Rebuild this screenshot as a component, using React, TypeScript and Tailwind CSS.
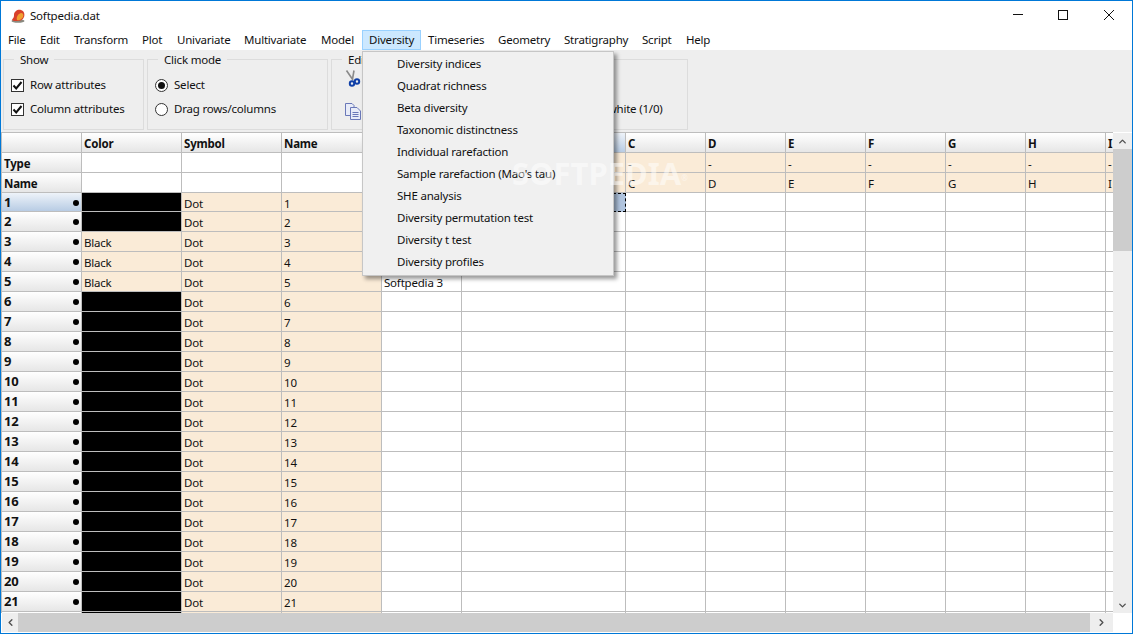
import { ChevronDown, ChevronLeft, ChevronRight, ChevronUp } from "lucide-react"

const menus = [
    { label: "File", w: "w-[32px]" },
    { label: "Edit", w: "w-[34px]" },
    { label: "Transform", w: "w-[68px]" },
    { label: "Plot", w: "w-[35px]" },
    { label: "Univariate", w: "w-[67px]" },
    { label: "Multivariate", w: "w-[77px]" },
    { label: "Model", w: "w-[48px]" },
    { label: "Diversity", w: "w-[59px]" },
    { label: "Timeseries", w: "w-[70px]" },
    { label: "Geometry", w: "w-[66px]" },
    { label: "Stratigraphy", w: "w-[78px]" },
    { label: "Script", w: "w-[44px]" },
    { label: "Help", w: "w-[39px]" },
]

const diversityItems = [
    "Diversity indices",
    "Quadrat richness",
    "Beta diversity",
    "Taxonomic distinctness",
    "Individual rarefaction",
    "Sample rarefaction (Mao's tau)",
    "SHE analysis",
    "Diversity permutation test",
    "Diversity t test",
    "Diversity profiles",
]

const letters = ["A", "B", "C", "D", "E", "F", "G", "H", "I"]
const colorNames = [3, 4, 5]
const rowCols = "grid grid-cols-[80px_100px_100px_100px_80px_164px_80px_80px_80px_80px_80px_80px_80px]"
const line = "border-r border-b border-[#bdbdbd] overflow-hidden whitespace-nowrap"

const AppIcon = () => (
    <svg width="16" height="16" viewBox="0 0 16 16">
        <ellipse cx="8" cy="13" rx="6.5" ry="1.8" fill="#8a8a80" />
        <path d="M2 12 C3 10 4 10 4 7 C4 3 8 1 11 2 C14 3 15 6 14 9 C13 12 10 13 7 13 C5 13 3 13 2 12 Z" fill="#d8402a" />
        <path d="M7 12 C6 9 8 6 11 5 C13 5 14 7 13 9 C12 11 9 13 7 12 Z" fill="#f0a030" />
    </svg>
)

const Check = () => (
    <span className="w-[13px] h-[13px] bg-white border border-[#333333] flex items-center justify-center">
        <svg width="11" height="11" viewBox="0 0 11 11">
            <path d="M1.5 5.5 L4.2 8.5 L9.5 2" fill="none" stroke="#111111" strokeWidth="2" />
        </svg>
    </span>
)

const Radio = ({ on }: { on?: boolean }) => (
    <span className="w-[13px] h-[13px] bg-white border border-[#333333] rounded-full flex items-center justify-center">
        {on && <span className="w-[7px] h-[7px] rounded-full bg-[#111111]" />}
    </span>
)

const Option = ({ control, label }: { control: React.ReactNode; label: string }) => (
    <div className="flex items-center h-[24px] gap-[6px]">
        {control}
        <span>{label}</span>
    </div>
)

const Group = ({ title, w, children }: { title: string; w: string; children?: React.ReactNode }) => (
    <fieldset className={`${w} h-[79px] border border-[#dcdcdc] pl-[7px] pt-[6px]`}>
        <legend className="ml-[3px] px-[6px] h-[16px] leading-[18px]">{title}</legend>
        {children}
    </fieldset>
)

const HeaderCell = ({ children, blue }: { children?: React.ReactNode; blue?: boolean }) => (
    <div className={`${line} pl-[2px] pt-[1px] font-bold leading-[19px] bg-gradient-to-b ${blue ? "from-[#eef3f9] to-[#b8cce4]" : "from-[#ffffff] to-[#e6e6e6]"}`}>
        {children}
    </div>
)

const Cell = ({ children, peach }: { children?: React.ReactNode; peach?: boolean }) => (
    <div className={`${line} pl-[2px] pt-[1px] leading-[19px] ${peach ? "bg-[#faebd7]" : "bg-white"}`}>{children}</div>
)

const DataRow = ({ n }: { n: number }) => {
    // row 22 only shows as a sliver above the scrollbar
    const sliver = n === 22
    const hasName = colorNames.includes(n)
    return (
        <div className={`${rowCols} ${n === 1 ? "h-[19px]" : "h-[20px]"}`}>
            <HeaderCell blue={n === 1}>
                {!sliver && (
                    <div className="flex items-center justify-between h-[17px] pr-[2px] text-[13px]">
                        <span>{n}</span>
                        <span className="w-[6px] h-[6px] rounded-full bg-black" />
                    </div>
                )}
            </HeaderCell>
            {hasName ? <Cell peach>Black</Cell> : <div className={`${line} bg-black`} />}
            <Cell peach>{!sliver && "Dot"}</Cell>
            <Cell peach>{!sliver && n}</Cell>
            <Cell>{n === 5 ? "Softpedia 3" : ""}</Cell>
            {n === 1 ? <div className="bg-[#b0c4de] border border-dashed border-black" /> : <Cell />}
            {letters.slice(2).map((l) => <Cell key={l} />)}
        </div>
    )
}

const App = () => {
    const rows = Array.from({ length: 22 }, (_, i) => i + 1)

    return (
        <div className="relative w-[1133px] h-[634px] overflow-hidden bg-white border border-[#0078d7] flex flex-col text-[11.5px] tracking-[-0.2px] text-[#111111] font-['Noto_Sans',sans-serif]">
            {/* title bar */}
            <div className="h-[29px] flex items-center shrink-0 pl-[9px]">
                <AppIcon />
                <span className="ml-[4px] mt-[1px]">Softpedia.dat</span>
                <div className="ml-auto flex items-center mb-[2px]">
                    <svg width="140" height="12" viewBox="0 0 140 12" fill="none" stroke="#111111">
                        <path d="M21 5.5 H31" />
                        <rect x="66.5" y="1.5" width="9" height="9" />
                        <path d="M112 1 L122 11 M122 1 L112 11" />
                    </svg>
                </div>
            </div>

            {/* menu bar */}
            <div className="h-[20px] flex shrink-0 items-center">
                {menus.map((m) => (
                    <div
                        key={m.label}
                        className={`${m.w} h-[20px] leading-[18px] whitespace-nowrap border-y ${m.label === "Diversity" ? "bg-[#cce8ff] border-x border-[#99d1ff] pl-[6px]" : "pl-[7px] border-transparent"}`}
                    >
                        {m.label}
                    </div>
                ))}
            </div>

            {/* toolbar */}
            <div className="h-[82px] shrink-0 bg-[#eeeeee] flex gap-[3px] pl-[2px] pt-[1px]">
                <Group title="Show" w="w-[141px]">
                    <Option control={<Check />} label="Row attributes" />
                    <Option control={<Check />} label="Column attributes" />
                </Group>
                <Group title="Click mode" w="w-[181px]">
                    <Option control={<Radio on />} label="Select" />
                    <Option control={<Radio />} label="Drag rows/columns" />
                </Group>
                <Group title="Edit" w="w-[357px]">
                    <div className="flex items-start h-[24px]">
                        <svg width="16" height="17" viewBox="0 0 16 17" className="ml-[6px] -mt-[3px]">
                            <path d="M1.5 0.5 L8 10 M9 0.5 L7.5 9" stroke="#8a8a8a" strokeWidth="1.6" fill="none" />
                            <circle cx="7" cy="13.5" r="2.2" fill="none" stroke="#1040a8" strokeWidth="2" />
                            <circle cx="12" cy="11.5" r="2.2" fill="none" stroke="#1040a8" strokeWidth="2" />
                        </svg>
                    </div>
                    <div className="flex items-center h-[24px]">
                        <svg width="18" height="18" viewBox="0 0 18 18" className="ml-[5px] mt-[4px]" fill="#e8ecf8" stroke="#6a78b8">
                            <path d="M1.5 1.5 H8 L10 3.5 V13.5 H1.5 Z" />
                            <path d="M6.5 5.5 H13 L16.5 9 V17.5 H6.5 Z" />
                            <path d="M8.5 10.5 H14.5 M8.5 12.5 H14.5 M8.5 14.5 H14.5" fill="none" />
                        </svg>
                        <span className="ml-[214px]">Black/white (1/0)</span>
                    </div>
                </Group>
            </div>

            {/* table area */}
            <div className="flex-1 min-h-0 flex flex-col">
                <div className="flex-1 min-h-0 flex">
                    <div className="w-[1112px] overflow-hidden border-t border-l border-[#bdbdbd]">
                        <div className={`${rowCols} h-[20px]`}>
                            <HeaderCell />
                            <HeaderCell>Color</HeaderCell>
                            <HeaderCell>Symbol</HeaderCell>
                            <HeaderCell>Name</HeaderCell>
                            {letters.map((l) => <HeaderCell key={l} blue={l === "B"}>{l}</HeaderCell>)}
                        </div>
                        <div className={`${rowCols} h-[20px]`}>
                            <HeaderCell>Type</HeaderCell>
                            <Cell /><Cell /><Cell />
                            {letters.map((l) => <Cell key={l} peach>-</Cell>)}
                        </div>
                        <div className={`${rowCols} h-[20px]`}>
                            <HeaderCell>Name</HeaderCell>
                            <Cell /><Cell /><Cell />
                            {letters.map((l) => <Cell key={l} peach>{l}</Cell>)}
                        </div>
                        {rows.map((n) => <DataRow key={n} n={n} />)}
                    </div>
                    <div className="w-[19px] mt-[1px] bg-[#eeeeee] flex flex-col">
                        <div className="h-[16px] flex items-center justify-center text-[#505050]"><ChevronUp size={11} strokeWidth={3} /></div>
                        <div className="h-[102px] bg-[#cdcdcd]" />
                        <div className="flex-1" />
                        <div className="h-[16px] flex items-center justify-center text-[#505050]"><ChevronDown size={11} strokeWidth={3} /></div>
                    </div>
                </div>
                <div className="h-[19px] shrink-0 flex ml-[1px] mb-[1px]">
                    <div className="w-[1111px] bg-[#eeeeee] flex items-center">
                        <div className="w-[16px] flex justify-center text-[#505050]"><ChevronLeft size={11} strokeWidth={3} /></div>
                        <div className="w-[1072px] h-full bg-[#cdcdcd]" />
                        <div className="flex-1 flex justify-center text-[#505050]"><ChevronRight size={11} strokeWidth={3} /></div>
                    </div>
                </div>
            </div>

            {/* open Diversity menu */}
            <div className="absolute left-[361px] top-[50px] w-[252px] h-[225px] bg-[#f0f0f0] border border-[#c6c6c6] shadow-[3px_3px_4px_rgba(0,0,0,0.4)] pt-[1px]">
                {diversityItems.map((item) => (
                    <div key={item} className="h-[22px] leading-[22px] pl-[34px] whitespace-nowrap">{item}</div>
                ))}
            </div>

            {/* watermark */}
            <div className="absolute left-[511px] top-[152px] text-[31px] leading-[40px] font-bold tracking-[0px] text-white/50 whitespace-nowrap">
                SOFTPEDIA<sup className="text-[8px] font-normal">®</sup>
            </div>
        </div>
    )
}

export default App
